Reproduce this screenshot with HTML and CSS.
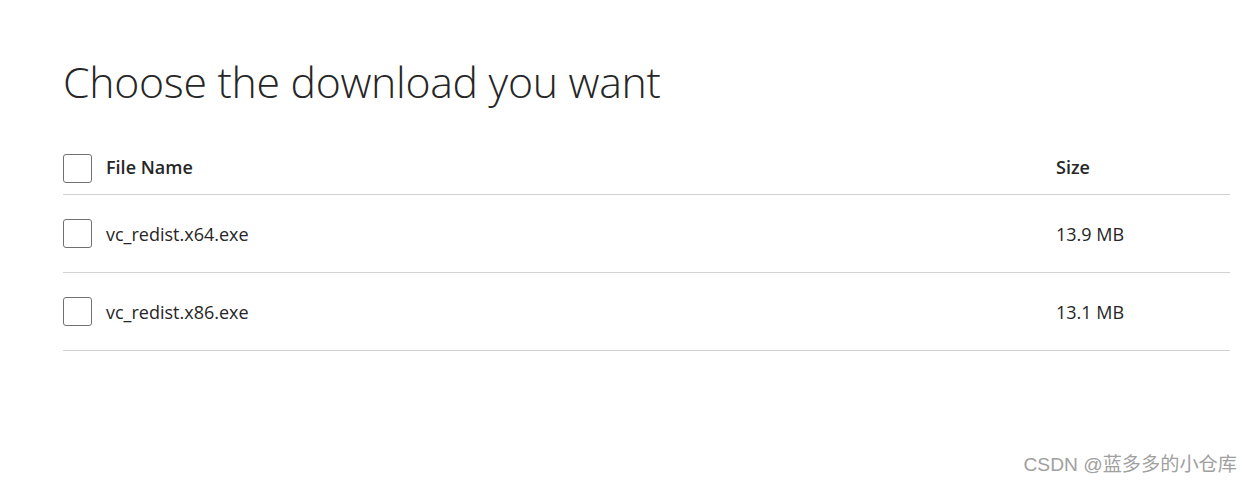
FILE: index.html
```html
<!DOCTYPE html>
<html lang="en">
<head>
<meta charset="utf-8">
<title>Choose the download you want</title>
<link rel="stylesheet" href="styles.css">
</head>
<body>
<main class="page">
  <h1 class="title">Choose the download you want</h1>
  <div class="table">
    <div class="row head">
      <div class="cell name"><span class="check"></span><span class="label">File Name</span></div>
      <div class="cell size"><span class="label">Size</span></div>
    </div>
    <div class="row">
      <div class="cell name"><span class="check"></span><span class="label">vc_redist.x64.exe</span></div>
      <div class="cell size">13.9 MB</div>
    </div>
    <div class="row">
      <div class="cell name"><span class="check"></span><span class="label">vc_redist.x86.exe</span></div>
      <div class="cell size">13.1 MB</div>
    </div>
  </div>
</main>
<div class="watermark">CSDN @蓝多多的小仓库</div>
</body>
</html>
```

FILE: styles.css
```css
html, body {
  margin: 0;
  padding: 0;
  background: #ffffff;
}
body {
  font-family: "Open Sans", "Noto Sans", sans-serif;
  color: #262626;
  width: 1251px;
  height: 484px;
  overflow: hidden;
  position: relative;
}
.page {
  padding: 52px 21px 0 63px;
}
.title {
  margin: 0;
  font-weight: 300;
  font-size: 42.8px;
  line-height: 60px;
  letter-spacing: -0.3px;
  color: #262626;
}
.table {
  margin-top: 31px;
}
.row {
  display: grid;
  grid-template-columns: 993px 1fr;
  align-items: center;
  height: 77px;
  border-bottom: 1px solid #d2d2d2;
}
.row.head {
  height: 51px;
}
.cell {
  display: flex;
  align-items: center;
  font-size: 18px;
}
.head .cell {
  font-weight: 600;
}
.head .label {
  margin-bottom: 4px;
}
.check {
  width: 27px;
  height: 27px;
  border: 1px solid #707070;
  border-radius: 3px;
  box-sizing: content-box;
  margin-right: 14px;
  flex: none;
}
.watermark {
  position: absolute;
  right: 14px;
  bottom: 6px;
  font-family: "Liberation Sans Narrow", "Liberation Sans", "Noto Sans CJK SC", sans-serif;
  font-size: 19.2px;
  line-height: 26px;
  color: #a0a0a0;
}
```
